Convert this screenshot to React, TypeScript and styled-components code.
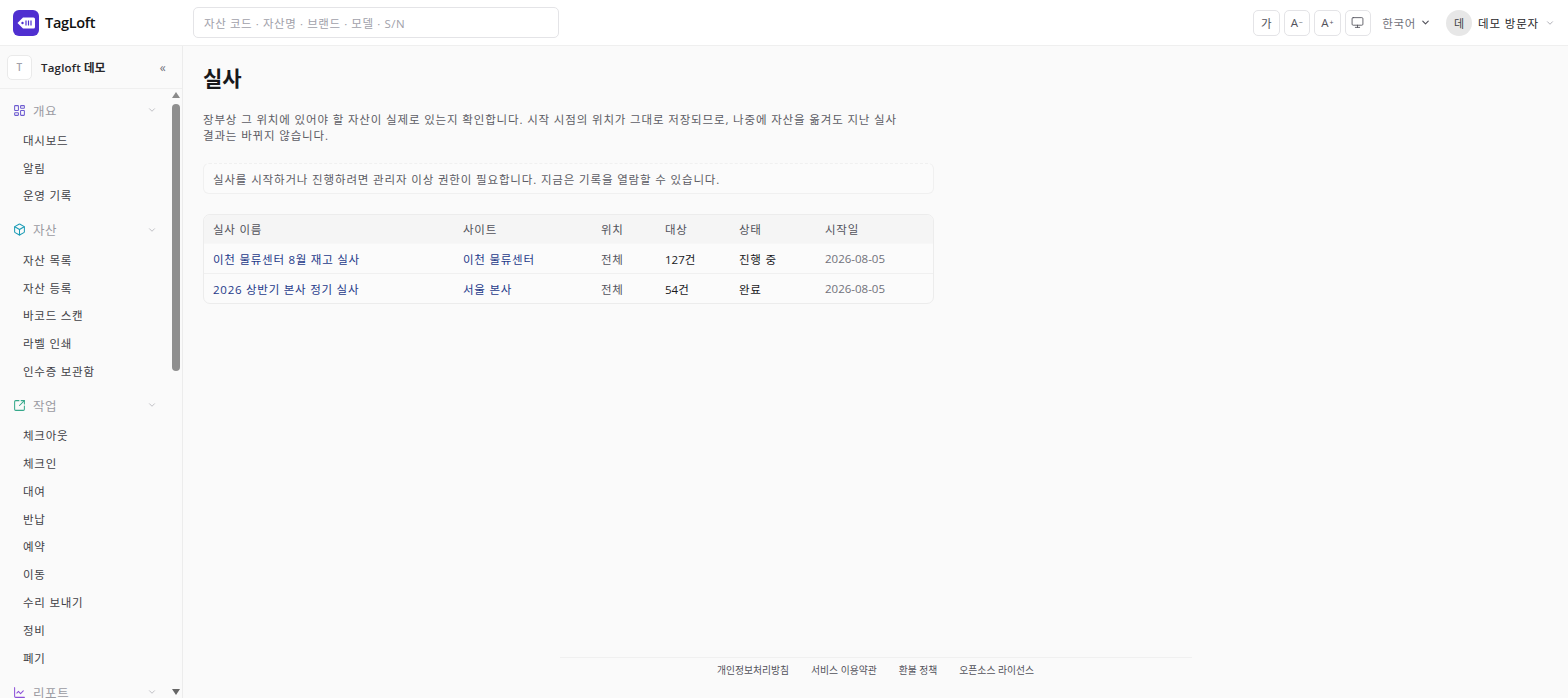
import React from 'react';
import styled, { createGlobalStyle } from 'styled-components';
import { ChevronDown, Monitor, LayoutDashboard, Box, SquareArrowOutUpRight, ChartLine } from 'lucide-react';

const GlobalStyle = createGlobalStyle`
  * { box-sizing: border-box; }
  html, body { margin: 0; height: 100%; overflow: hidden; }
  body {
    font-family: "Open Sans", "Noto Sans CJK KR", sans-serif;
    background: #fafafa;
    color: #18181b;
  }
`;

const navGroups = [
  { label: '개요', icon: LayoutDashboard, color: '#6d5bd0', items: ['대시보드', '알림', '운영 기록'] },
  { label: '자산', icon: Box, color: '#1a9bb5', items: ['자산 목록', '자산 등록', '바코드 스캔', '라벨 인쇄', '인수증 보관함'] },
  { label: '작업', icon: SquareArrowOutUpRight, color: '#35a88a', items: ['체크아웃', '체크인', '대여', '반납', '예약', '이동', '수리 보내기', '정비', '폐기'] },
  { label: '리포트', icon: ChartLine, color: '#8b4fd8', items: [] as string[] },
];

const audits = [
  { name: '이천 물류센터 8월 재고 실사', site: '이천 물류센터', loc: '전체', target: '127건', status: '진행 중', date: '2026-08-05' },
  { name: '2026 상반기 본사 정기 실사', site: '서울 본사', loc: '전체', target: '54건', status: '완료', date: '2026-08-05' },
];

const Page = styled.div`
  height: 698px;
  display: flex;
  flex-direction: column;
  overflow: hidden;
`;

const TopBar = styled.header`
  height: 46px;
  flex: none;
  display: flex;
  align-items: center;
  background: #fff;
  border-bottom: 1px solid #efefef;
  padding: 0 13px 0 13px;
`;

const Brand = styled.div`
  width: 180px;
  display: flex;
  align-items: center;
  gap: 6px;
  font-size: 14.5px;
  font-weight: 600;
  letter-spacing: -0.3px;
  color: #111;
`;

const SearchBox = styled.div`
  width: 366px;
  height: 31px;
  display: flex;
  align-items: center;
  padding: 0 10px;
  background: #fff;
  border: 1px solid #e4e4e7;
  border-radius: 5px;
  font-size: 11.5px;
  letter-spacing: 0.58px;
  color: #a1a1aa;
`;

const TopActions = styled.div`
  margin-left: auto;
  display: flex;
  align-items: center;
`;

const ToolButton = styled.div`
  width: 26.5px;
  height: 26px;
  margin-right: 4px;
  display: flex;
  align-items: center;
  justify-content: center;
  background: #fff;
  border: 1px solid #e4e4e7;
  border-radius: 5px;
  font-size: 11.5px;
  color: #52525b;
  sup { font-size: 7px; margin-left: 1px; }
`;

const Language = styled.div`
  margin: 0 15px 0 7px;
  display: flex;
  align-items: center;
  gap: 4px;
  font-size: 11.5px;
  letter-spacing: 0.7px;
  color: #71717a;
  svg { color: #52525b; }
`;

const Avatar = styled.div`
  width: 26px;
  height: 26px;
  margin-right: 6px;
  display: flex;
  align-items: center;
  justify-content: center;
  background: #e7e7e7;
  border-radius: 50%;
  font-size: 11px;
  color: #3f3f46;
`;

const UserName = styled.span`
  margin-right: 6px;
  font-size: 11.5px;
  letter-spacing: 0.85px;
  color: #27272a;
`;

const Body = styled.div`
  flex: 1;
  min-height: 0;
  display: flex;
`;

const Sidebar = styled.aside`
  width: 183px;
  flex: none;
  display: flex;
  flex-direction: column;
  background: #fafafa;
  border-right: 1px solid #ececec;
`;

const Workspace = styled.div`
  height: 43px;
  flex: none;
  display: flex;
  align-items: center;
  padding: 0 16px 0 7px;
  border-bottom: 1px solid #efefef;
  font-size: 11.5px;
  font-weight: 600;
  color: #27272a;
  letter-spacing: 0.2px;
`;

const WorkspaceBadge = styled.div`
  width: 25px;
  height: 25px;
  margin-right: 9px;
  display: flex;
  align-items: center;
  justify-content: center;
  background: #fff;
  border: 1px solid #eaeaea;
  border-radius: 5px;
  font-size: 10px;
  color: #a1a1aa;
`;

const CollapseButton = styled.div`
  margin-left: auto;
  font-size: 12px;
  font-weight: 400;
  color: #71717a;
`;

const NavArea = styled.div`
  flex: 1;
  min-height: 0;
  display: flex;
`;

const NavList = styled.nav`
  flex: 1;
  min-width: 0;
  overflow: hidden;
  padding: 9px 0 0 13px;
`;

const NavGroup = styled.div`
  margin-bottom: 8.5px;
`;

const GroupHead = styled.div`
  height: 24px;
  margin-bottom: 4px;
  display: flex;
  align-items: center;
  gap: 7px;
  padding-right: 14px;
  font-size: 12.5px;
  letter-spacing: 0.6px;
  color: #9a9aa2;
`;

const GroupChevron = styled.span`
  margin-left: auto;
  display: flex;
  color: #b4b4bb;
`;

const NavItem = styled.div`
  height: 27.8px;
  display: flex;
  align-items: center;
  padding-left: 10px;
  font-size: 11.5px;
  letter-spacing: 0.75px;
  color: #3f3f46;
`;

const ScrollRail = styled.div`
  width: 10px;
  flex: none;
  margin-right: 1px;
  display: flex;
  flex-direction: column;
  align-items: center;
  padding-top: 3px;
`;

const ScrollArrow = styled.div<{ $down?: boolean }>`
  width: 0;
  height: 0;
  flex: none;
  border-left: 4px solid transparent;
  border-right: 4px solid transparent;
  ${p => (p.$down ? 'border-top: 6px solid #666; margin: auto 0 3px;' : 'border-bottom: 6px solid #8a8a8a;')}
`;

const ScrollThumb = styled.div`
  width: 8px;
  height: 267px;
  margin-top: 6px;
  background: #8f8f8f;
  border-radius: 4px;
`;

const Main = styled.main`
  flex: 1;
  min-width: 0;
  display: flex;
  flex-direction: column;
  padding: 19px 20px 0 20px;
  background: #fafafa;
`;

const Title = styled.h1`
  margin: 0 0 21px;
  font-size: 21px;
  line-height: 26px;
  font-weight: 700;
  color: #18181b;
`;

const Intro = styled.p`
  width: 700px;
  margin: 0 0 19px;
  font-size: 11.5px;
  line-height: 16px;
  letter-spacing: 0.85px;
  color: #5c5c64;
`;

const Notice = styled.div`
  width: 731px;
  height: 31px;
  display: flex;
  align-items: center;
  padding: 0 9px;
  margin-bottom: 20px;
  background: #fbfbfb;
  border: 1px solid #f0f0f0;
  border-top-style: dashed;
  border-radius: 6px;
  font-size: 11.5px;
  letter-spacing: 0.85px;
  color: #5c5c64;
`;

const TableCard = styled.table`
  width: 731px;
  table-layout: fixed;
  border-collapse: separate;
  border-spacing: 0;
  border: 1px solid #ececec;
  border-radius: 7px;
  overflow: hidden;
  background: #fbfbfb;
  font-size: 11.5px;
  letter-spacing: 0.75px;
`;

const HeadCell = styled.th<{ $width: number }>`
  width: ${p => p.$width}px;
  height: 28px;
  padding: 0 9px;
  text-align: left;
  font-weight: 400;
  color: #52525b;
  background: #f5f5f5;
`;

const Cell = styled.td<{ $tone?: 'link' | 'strong' | 'count' | 'date'; $first?: boolean }>`
  height: 30px;
  padding: 0 9px;
  border-top: 1px solid ${p => (p.$first ? '#f7f7f7' : '#f0f0f0')};
  color: ${p =>
    p.$tone === 'link' ? '#1e3a8a' : p.$tone === 'strong' || p.$tone === 'count' ? '#18181b' : p.$tone === 'date' ? '#71717a' : '#52525b'};
  letter-spacing: ${p => (p.$tone === 'date' || p.$tone === 'count' ? '0' : '0.75px')};
`;

const Footer = styled.footer`
  margin-top: auto;
  align-self: center;
  width: 632px;
  height: 41px;
  display: flex;
  justify-content: center;
  gap: 22px;
  padding-top: 5px;
  border-top: 1px solid #f0f0f0;
  font-size: 9.8px;
  color: #52525b;
`;

const App = () => (
  <Page>
    <GlobalStyle />
    <TopBar>
      <Brand>
        <svg width="26" height="26" viewBox="0 0 26 26">
          <rect width="26" height="26" rx="6" fill="#4f2fd0" />
          <path d="M10 7.5h10.5a1.5 1.5 0 0 1 1.5 1.5v8a1.5 1.5 0 0 1-1.5 1.5H10L4.5 13z" fill="#fff" />
          <circle cx="9.5" cy="13" r="1.2" fill="#4f2fd0" />
          <path d="M13 10.5v5M15.5 10.5v5M18 10.5v5" stroke="#4f2fd0" strokeWidth="1.2" />
        </svg>
        TagLoft
      </Brand>
      <SearchBox>자산 코드 · 자산명 · 브랜드 · 모델 · S/N</SearchBox>
      <TopActions>
        <ToolButton>가</ToolButton>
        <ToolButton>A<sup>−</sup></ToolButton>
        <ToolButton>A<sup>+</sup></ToolButton>
        <ToolButton><Monitor size={13} strokeWidth={1.6} /></ToolButton>
        <Language>한국어 <ChevronDown size={11} strokeWidth={2.5} /></Language>
        <Avatar>데</Avatar>
        <UserName>데모 방문자</UserName>
        <ChevronDown size={10} color="#a1a1aa" />
      </TopActions>
    </TopBar>
    <Body>
      <Sidebar>
        <Workspace>
          <WorkspaceBadge>T</WorkspaceBadge>
          Tagloft 데모
          <CollapseButton>«</CollapseButton>
        </Workspace>
        <NavArea>
          <NavList>
            {navGroups.map(group => {
              const Icon = group.icon;
              return (
                <NavGroup key={group.label}>
                  <GroupHead>
                    <Icon size={13} color={group.color} strokeWidth={1.9} />
                    {group.label}
                    <GroupChevron><ChevronDown size={10} /></GroupChevron>
                  </GroupHead>
                  {group.items.map(item => <NavItem key={item}>{item}</NavItem>)}
                </NavGroup>
              );
            })}
          </NavList>
          <ScrollRail>
            <ScrollArrow />
            <ScrollThumb />
            <ScrollArrow $down />
          </ScrollRail>
        </NavArea>
      </Sidebar>
      <Main>
        <Title>실사</Title>
        <Intro>
          장부상 그 위치에 있어야 할 자산이 실제로 있는지 확인합니다. 시작 시점의 위치가 그대로 저장되므로, 나중에 자산을 옮겨도 지난 실사 결과는 바뀌지 않습니다.
        </Intro>
        <Notice>실사를 시작하거나 진행하려면 관리자 이상 권한이 필요합니다. 지금은 기록을 열람할 수 있습니다.</Notice>
        <TableCard>
          <thead>
            <tr>
              <HeadCell $width={250}>실사 이름</HeadCell>
              <HeadCell $width={138}>사이트</HeadCell>
              <HeadCell $width={64}>위치</HeadCell>
              <HeadCell $width={74}>대상</HeadCell>
              <HeadCell $width={86}>상태</HeadCell>
              <HeadCell $width={117}>시작일</HeadCell>
            </tr>
          </thead>
          <tbody>
            {audits.map((a, i) => (
              <tr key={a.name}>
                <Cell $tone="link" $first={i === 0}>{a.name}</Cell>
                <Cell $tone="link" $first={i === 0}>{a.site}</Cell>
                <Cell $first={i === 0}>{a.loc}</Cell>
                <Cell $tone="count" $first={i === 0}>{a.target}</Cell>
                <Cell $tone="strong" $first={i === 0}>{a.status}</Cell>
                <Cell $tone="date" $first={i === 0}>{a.date}</Cell>
              </tr>
            ))}
          </tbody>
        </TableCard>
        <Footer>
          <span>개인정보처리방침</span>
          <span>서비스 이용약관</span>
          <span>환불 정책</span>
          <span>오픈소스 라이선스</span>
        </Footer>
      </Main>
    </Body>
  </Page>
);

export default App;
